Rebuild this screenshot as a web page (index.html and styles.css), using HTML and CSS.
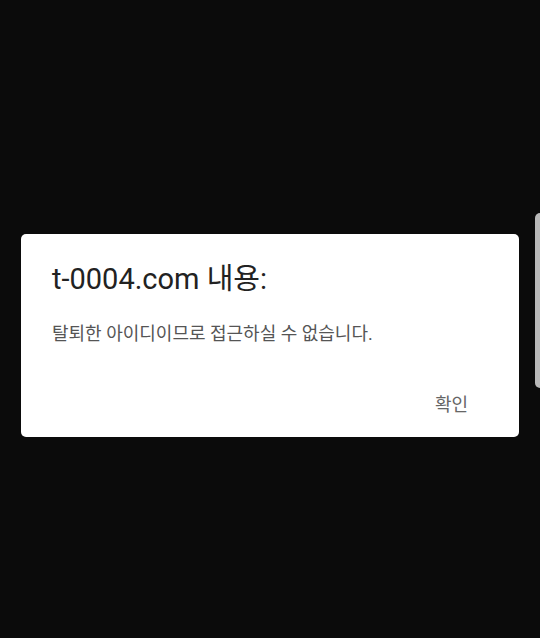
FILE: index.html
```html
<!DOCTYPE html>
<html lang="ko">
<head>
<meta charset="utf-8">
<link rel="stylesheet" href="styles.css">
</head>
<body>
<div class="screen">
  <div class="dialog">
    <div class="title">t-0004.com 내용:</div>
    <div class="message">탈퇴한 아이디이므로 접근하실 수 없습니다.</div>
    <div class="actions"><span class="ok">확인</span></div>
  </div>
  <div class="edge"></div>
</div>
</body>
</html>
```

FILE: styles.css
```css
html, body {
  margin: 0;
  padding: 0;
  background: #0b0b0b;
}
.screen {
  position: relative;
  width: 540px;
  height: 638px;
  background: #0b0b0b;
  padding-top: 234px;
  box-sizing: border-box;
}
.dialog {
  margin-left: 21px;
  width: 498px;
  height: 203px;
  background: #ffffff;
  border-radius: 5px;
  box-sizing: border-box;
  padding: 26px 0 0 31px;
  font-family: Roboto, "Noto Sans CJK KR", sans-serif;
}
.title {
  font-size: 29px;
  line-height: 38px;
  color: #222222;
}
.message {
  margin-top: 23px;
  font-size: 18px;
  line-height: 26px;
  color: #555555;
}
.actions {
  display: flex;
  justify-content: flex-end;
  padding-right: 51px;
  margin-top: 45px;
}
.ok {
  font-size: 18px;
  line-height: 26px;
  color: #666666;
}
.edge {
  position: absolute;
  right: 0;
  top: 213px;
  width: 5px;
  height: 175px;
  background: #b9b9b9;
  border-radius: 5px 0 0 5px;
}
```
